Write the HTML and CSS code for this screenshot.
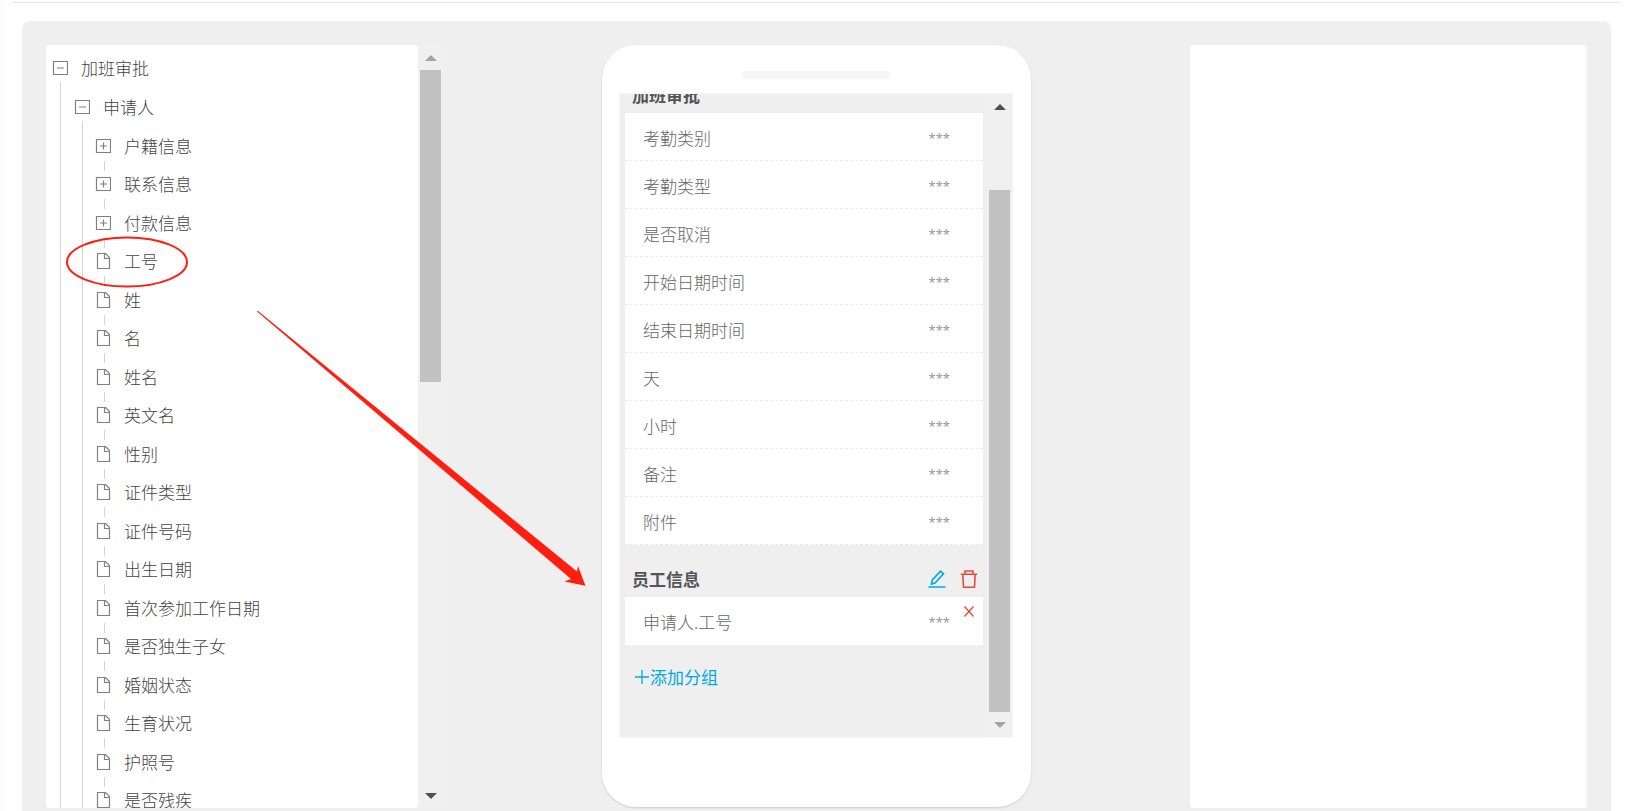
FILE: index.html
```html
<!DOCTYPE html>
<html lang="zh-CN">
<head>
    <meta charset="UTF-8">
    <meta name="viewport" content="width=device-width, initial-scale=1.0">
    <title>加班审批</title>
    <link rel="stylesheet" href="styles.css">
</head>
<body>
    <!-- 图标 -->
    <svg class="sprite" width="0" height="0">
        <symbol id="i-minus" viewBox="0 0 16 16"><path d="M1.500 1.500h14v13h-14zM5 8h7"/></symbol>
        <symbol id="i-plus" viewBox="0 0 16 16"><path d="M1.500 1.500h14v13h-14zM5 8h7M8.500 4.500v7"/></symbol>
        <symbol id="i-file" viewBox="0 0 16 16"><path d="M2.500 .5h8l4 4v11h-12zM9.500 .5v5h5"/></symbol>
    </svg>

    <div class="page">
        <div class="workspace">
            <!-- 左侧字段树 -->
            <div class="side">
                <div class="tree-panel">
                    <ul class="tree">
                        <li class="branch">
                            <div class="node"><svg class="icon"><use href="#i-minus"/></svg>加班审批</div>
                            <ul>
                                <li class="branch">
                                    <div class="node"><svg class="icon"><use href="#i-minus"/></svg>申请人</div>
                                    <ul class="leaves">
                                        <li class="node"><svg class="icon"><use href="#i-plus"/></svg>户籍信息</li>
                                        <li class="node"><svg class="icon"><use href="#i-plus"/></svg>联系信息</li>
                                        <li class="node"><svg class="icon"><use href="#i-plus"/></svg>付款信息</li>
                                        <li class="node"><svg class="icon"><use href="#i-file"/></svg>工号</li>
                                        <li class="node"><svg class="icon"><use href="#i-file"/></svg>姓</li>
                                        <li class="node"><svg class="icon"><use href="#i-file"/></svg>名</li>
                                        <li class="node"><svg class="icon"><use href="#i-file"/></svg>姓名</li>
                                        <li class="node"><svg class="icon"><use href="#i-file"/></svg>英文名</li>
                                        <li class="node"><svg class="icon"><use href="#i-file"/></svg>性别</li>
                                        <li class="node"><svg class="icon"><use href="#i-file"/></svg>证件类型</li>
                                        <li class="node"><svg class="icon"><use href="#i-file"/></svg>证件号码</li>
                                        <li class="node"><svg class="icon"><use href="#i-file"/></svg>出生日期</li>
                                        <li class="node"><svg class="icon"><use href="#i-file"/></svg>首次参加工作日期</li>
                                        <li class="node"><svg class="icon"><use href="#i-file"/></svg>是否独生子女</li>
                                        <li class="node"><svg class="icon"><use href="#i-file"/></svg>婚姻状态</li>
                                        <li class="node"><svg class="icon"><use href="#i-file"/></svg>生育状况</li>
                                        <li class="node"><svg class="icon"><use href="#i-file"/></svg>护照号</li>
                                        <li class="node"><svg class="icon"><use href="#i-file"/></svg>是否残疾</li>
                                    </ul>
                                </li>
                            </ul>
                        </li>
                    </ul>
                </div>
                <div class="scrollbar">
                    <span class="arrow up off"></span>
                    <div class="track"><div class="thumb tree-thumb"></div></div>
                    <span class="arrow down"></span>
                </div>
            </div>

            <!-- 手机预览 -->
            <div class="phone">
                <div class="speaker"></div>
                <div class="screen">
                    <div class="form">
                        <div class="group-head"><h3>加班审批</h3></div>
                        <div class="row"><span>考勤类别</span><span class="stars">***</span></div>
                        <div class="row"><span>考勤类型</span><span class="stars">***</span></div>
                        <div class="row"><span>是否取消</span><span class="stars">***</span></div>
                        <div class="row"><span>开始日期时间</span><span class="stars">***</span></div>
                        <div class="row"><span>结束日期时间</span><span class="stars">***</span></div>
                        <div class="row"><span>天</span><span class="stars">***</span></div>
                        <div class="row"><span>小时</span><span class="stars">***</span></div>
                        <div class="row"><span>备注</span><span class="stars">***</span></div>
                        <div class="row"><span>附件</span><span class="stars">***</span></div>

                        <div class="group-head">
                            <h3>员工信息</h3>
                            <button type="button" class="icon-btn edit" aria-label="编辑">
                                <svg viewBox="0 0 18 18"><path d="M.5 17h17M3.500 14l.8-4L12.500 1.200l3 2.600L7 13z"/></svg>
                            </button>
                            <button type="button" class="icon-btn delete" aria-label="删除">
                                <svg viewBox="0 0 18 18"><path d="M.8 4.200h16.400M5 4V1h8v3M2.800 4.500l.7 12.700h11l.7-12.700"/></svg>
                            </button>
                        </div>
                        <div class="row custom">
                            <span>申请人.工号</span><span class="stars">***</span>
                            <button type="button" class="remove" aria-label="移除">
                                <svg viewBox="0 0 10 11"><path d="M.5 .5l9 10M9.500 .5l-9 10"/></svg>
                            </button>
                        </div>

                        <button type="button" class="add-group">
                            <svg viewBox="0 0 14 14"><path d="M0 7h14M7 0v14"/></svg>添加分组
                        </button>
                    </div>
                    <div class="scrollbar">
                        <span class="arrow up"></span>
                        <div class="track bottom"><div class="thumb form-thumb"></div></div>
                        <span class="arrow down off"></span>
                    </div>
                </div>
            </div>

            <!-- 右侧属性面板 -->
            <div class="props-panel"></div>
        </div>
    </div>

    <!-- 拖拽示意 -->
    <svg class="guide" width="600" height="600">
        <ellipse cx="127" cy="262" rx="60" ry="24.500"/>
        <path d="M257 311.500L257.800 310.800L577 571.500L578 566L585.500 585.800L564.500 581.500L571 579z"/>
    </svg>
</body>
</html>
```

FILE: styles.css
```css
* {
    box-sizing: border-box;
}
body {
    margin: 0;
    height: 100vh;
    overflow: hidden;
    position: relative;
    background: linear-gradient(to right, #fafafa, #fff 6px);
    font-family: "Noto Sans CJK SC", sans-serif;
    font-size: 17px;
    font-weight: 300;
    line-height: 24px;
    color: #444;
}
ul {
    list-style: none;
    margin: 0;
    padding: 0;
}
button {
    background: none;
    border: none;
    padding: 0;
    font: inherit;
    cursor: pointer;
}
svg {
    fill: none;
    stroke: currentColor;
}
.sprite {
    position: absolute;
}
.page {
    height: 100%;
    margin: 0 10px 0 13px;
    padding: 2px 0 0;
    display: flex;
    flex-direction: column;
}
.page::before {
    content: "";
    height: 1px;
    background: #e6e6e6;
    margin-bottom: 18px;
}
.workspace {
    flex: 1;
    min-height: 0;
    margin: 0 9px;
    padding: 24px 24px 3px;
    background: #efefef;
    border-radius: 8px 8px 0 0;
    display: grid;
    grid-template-columns: 397fr 747fr 397fr;
    grid-template-rows: minmax(0, 1fr);
}

/* 字段树 */
.side {
    display: flex;
    min-width: 0;
}
.tree-panel {
    flex: 1;
    background: #fff;
    border-radius: 4px;
    padding: 3px 6px;
    overflow: hidden;
}
.branch {
    position: relative;
}
.branch::before {
    content: "";
    position: absolute;
    left: 8px;
    top: 34px;
    bottom: 0;
    border-left: 1px solid #d4d4d4;
}
.branch ul {
    padding-left: 22px;
}
.branch .leaves {
    padding-left: 21px;
}
.node {
    position: relative;
    display: flex;
    align-items: center;
    gap: 13px;
    height: 39px;
}
.leaves .node:nth-child(even) {
    height: 38px;
}
.leaves .node::after {
    content: "";
    position: absolute;
    left: 9px;
    bottom: -6px;
    height: 10px;
    border-left: 1px solid #d4d4d4;
}
.icon {
    width: 16px;
    height: 16px;
    color: #808080;
    stroke-width: 1.2;
}

/* 滚动条 */
.scrollbar {
    flex: 0 0 25px;
    background: #f0f0f0;
    display: flex;
    flex-direction: column;
    align-items: center;
}
.arrow {
    height: 25px;
    display: flex;
    align-items: center;
}
.arrow::before {
    content: "";
    border: 6px solid transparent;
    border-top-width: 0;
    border-bottom: 6px solid #505050;
}
.arrow.down::before {
    border-top: 6px solid #505050;
    border-bottom-width: 0;
}
.arrow.up.off::before {
    border-bottom-color: #a3a3a3;
}
.arrow.down.off::before {
    border-top-color: #a3a3a3;
}
.track {
    flex: 1;
    width: 21px;
    display: flex;
    flex-direction: column;
}
.track.bottom {
    justify-content: flex-end;
}
.thumb {
    background: #c1c1c1;
}
.tree-thumb {
    height: 43.75%;
}
.form-thumb {
    height: 88%;
}

/* 手机 */
.phone {
    justify-self: center;
    width: 429px;
    margin-bottom: 1px;
    padding: 26px 18px 69px 17px;
    background: #fff;
    border-radius: 34px;
    box-shadow: 0 1px 2px rgba(0, 0, 0, 0.15);
    display: flex;
    flex-direction: column;
}
.speaker {
    flex: none;
    align-self: center;
    width: 148px;
    height: 8px;
    margin-bottom: 14px;
    border-radius: 4px;
    background: #f6f6f6;
}
.screen {
    flex: 1;
    min-height: 0;
    display: flex;
    border: 1px solid #f5f5f5;
    background: #efefef;
    overflow: hidden;
}
/* 预览停在最底部 */
.form {
    flex: 1;
    padding: 0 4px 0 5px;
    display: flex;
    flex-direction: column;
    justify-content: flex-end;
}
.group-head {
    flex: none;
    height: 52px;
    padding: 16px 5px 0 7px;
    display: flex;
    align-items: center;
    gap: 14px;
}
.group-head h3 {
    flex: 1;
    margin: 0;
    font-size: 17px;
    font-weight: 700;
    color: #555;
}
.icon-btn,
.icon-btn svg {
    display: block;
    width: 18px;
    height: 18px;
}
.icon-btn svg {
    stroke-width: 1.6;
}
.edit {
    color: #00aae6;
}
.delete,
.remove {
    color: #e64c38;
}
.row {
    flex: none;
    position: relative;
    height: 48px;
    padding: 2px 33px 0 18px;
    background: #fff;
    border-bottom: 1px dashed #ebebeb;
    color: #666;
    display: flex;
    align-items: center;
    justify-content: space-between;
}
.custom {
    border-bottom-color: #fff;
}
.stars {
    font-family: "Noto Sans", sans-serif;
    font-size: 13px;
    font-weight: 400;
    color: #999;
}
.remove {
    position: absolute;
    top: 9px;
    right: 9px;
    width: 10px;
    height: 11px;
}
.remove svg {
    display: block;
    stroke-width: 1.4;
}
.add-group {
    flex: none;
    align-self: flex-start;
    margin: 20px 0 48px 10px;
    color: #00aae6;
    font-weight: 400;
    display: flex;
    align-items: center;
    gap: 1px;
}
.add-group svg {
    width: 14px;
    height: 14px;
    stroke-width: 1.3;
}

.props-panel {
    background: #fff;
    border-radius: 4px;
}

.guide {
    position: absolute;
    left: 0;
    top: 0;
    pointer-events: none;
}
.guide ellipse {
    stroke: #ff1e10;
    stroke-width: 2;
}
.guide path {
    fill: #ff1e10;
    stroke: none;
}
```
